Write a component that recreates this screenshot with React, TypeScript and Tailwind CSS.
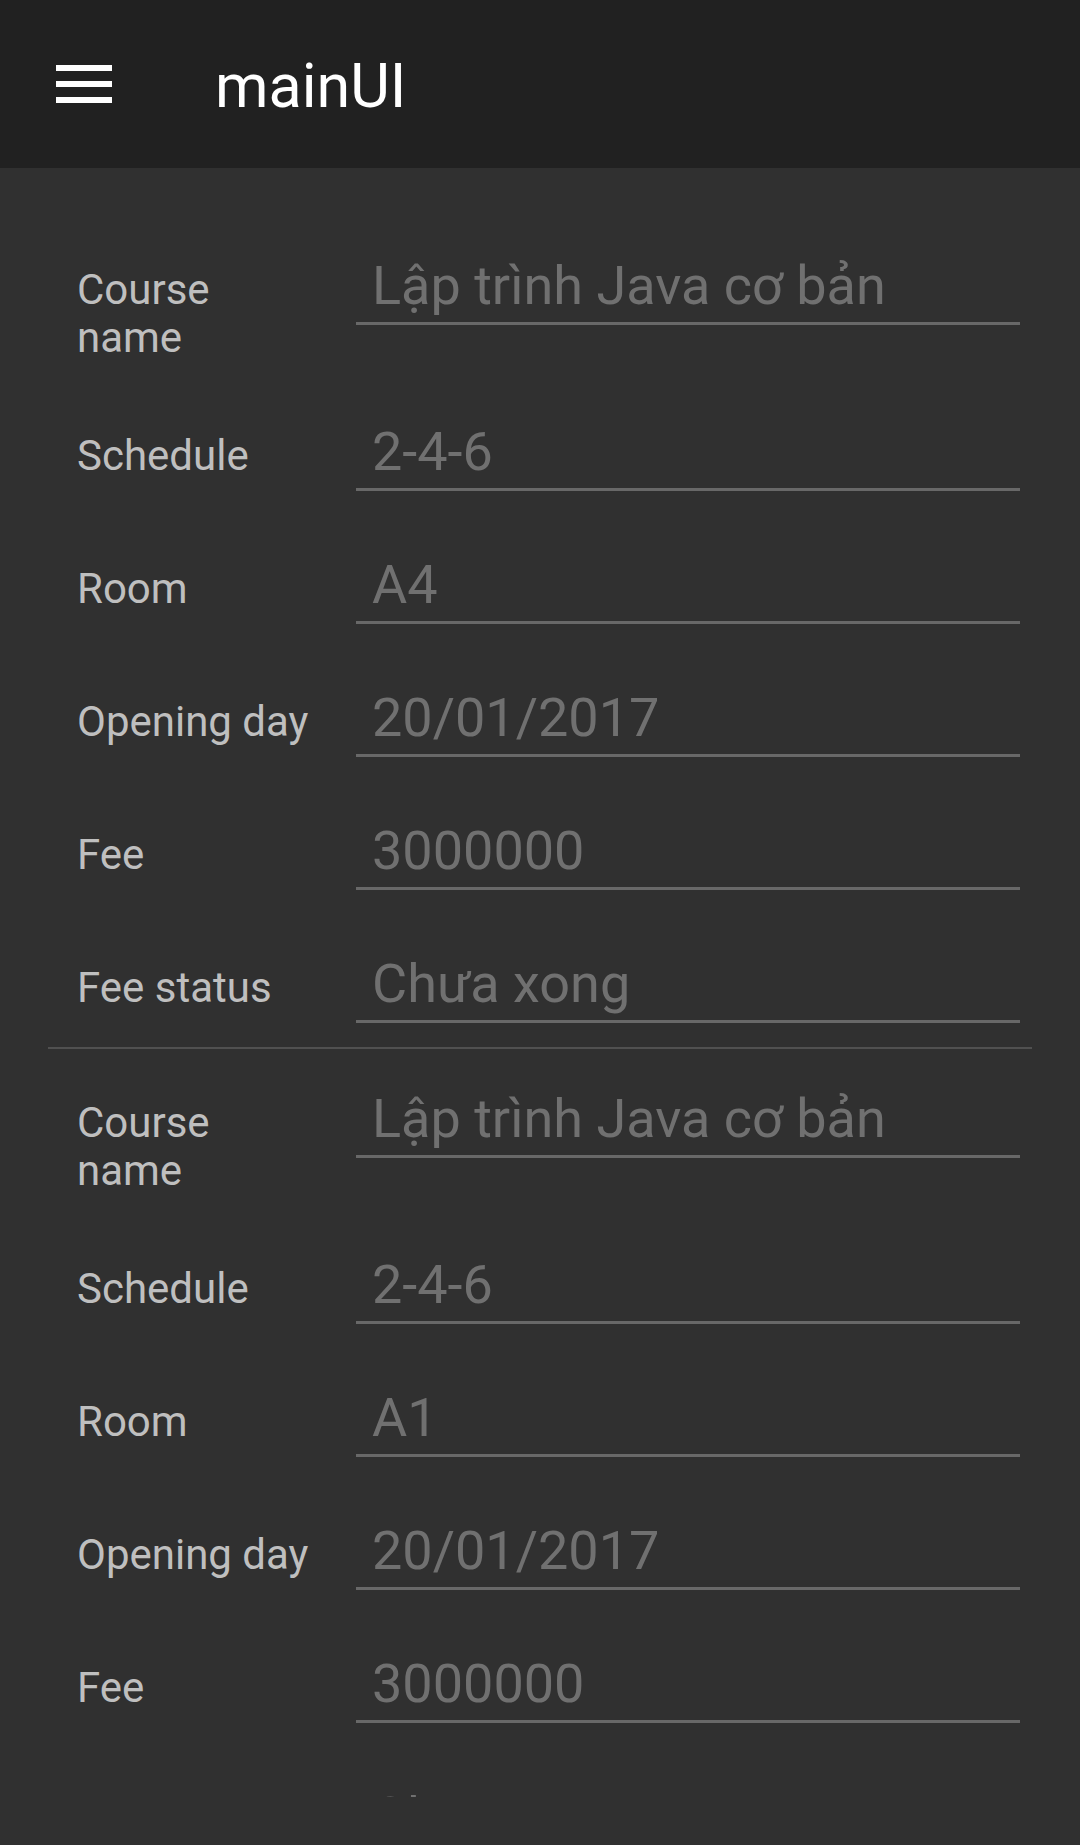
type Field = { label: string; value: string }

const courses: Field[][] = [
  [
    { label: 'Course name', value: 'Lập trình Java cơ bản' },
    { label: 'Schedule', value: '2-4-6' },
    { label: 'Room', value: 'A4' },
    { label: 'Opening day', value: '20/01/2017' },
    { label: 'Fee', value: '3000000' },
    { label: 'Fee status', value: 'Chưa xong' },
  ],
  [
    { label: 'Course name', value: 'Lập trình Java cơ bản' },
    { label: 'Schedule', value: '2-4-6' },
    { label: 'Room', value: 'A1' },
    { label: 'Opening day', value: '20/01/2017' },
    { label: 'Fee', value: '3000000' },
    { label: 'Fee status', value: 'Chưa xong' },
  ],
]

function Row({ field }: { field: Field }) {
  return (
    <div className="flex items-baseline pb-[24px]">
      <div className="-mb-[4px] mr-[43px] w-[236px] shrink-0 text-[42px] leading-[48px] text-[#bfbfbf]">
        {field.label}
      </div>
      <div className="mr-[12px] flex-1 border-b-[3px] border-[#686868] pt-[38px] pb-[4px] pl-[16px] text-[54px] leading-[64px] text-[#707070]">
        {field.value}
      </div>
    </div>
  )
}

export default function App() {
  return (
    <div className="h-[1845px] w-[1080px] overflow-hidden bg-[#303030] font-['Roboto',sans-serif]">
      <header className="flex h-[168px] items-center bg-[#212121]">
        <div className="ml-[56px] flex w-[56px] flex-col gap-[10px]">
          <span className="h-[6px] bg-white" />
          <span className="h-[6px] bg-white" />
          <span className="h-[6px] bg-white" />
        </div>
        <h1 className="ml-[103px] pt-[4px] text-[61px] leading-[70px] text-white">mainUI</h1>
      </header>

      {/* list area keeps 48px padding and clips its content, like the scrolled list */}
      <main className="h-[1677px] p-[48px]">
        <div className="h-full overflow-hidden">
          {courses.map((fields, i) => (
            <section key={i} className={i > 0 ? 'border-t-2 border-[#505050] pl-[29px]' : 'pl-[29px]'}>
              {fields.map((f) => (
                <Row key={f.label} field={f} />
              ))}
            </section>
          ))}
        </div>
      </main>
    </div>
  )
}
